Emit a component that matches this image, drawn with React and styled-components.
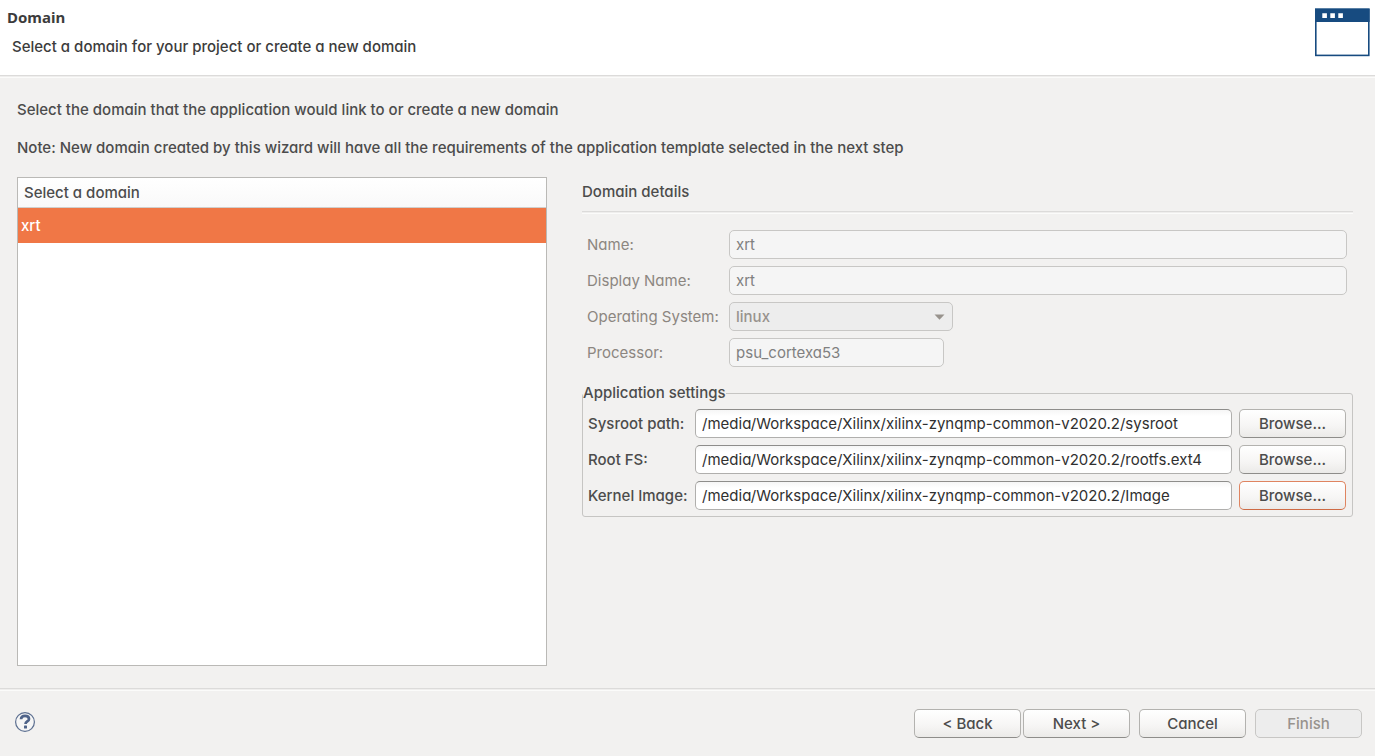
import React, { useState } from 'react';
import styled, { createGlobalStyle } from 'styled-components';

const GlobalStyle = createGlobalStyle`
    * {
        box-sizing: border-box;
    }
    body {
        margin: 0;
        background: #F2F1F0;
    }
    body, button, input, select, table {
        font-family: Inter, "Noto Sans", sans-serif;
        font-feature-settings: "cv11";
        font-size: 15px;
        font-weight: 500;
        line-height: 20px;
        color: #4C4C4C;
    }
`;
const Wizard = styled.div`
    display: flex;
    flex-direction: column;
    min-height: 100vh;
`;
const Header = styled.header`
    display: flex;
    justify-content: space-between;
    padding: 8px 4px 18px 7px;
    background: #FFFFFF;
`;
const Title = styled.h1`
    font-family: "Noto Sans", sans-serif;
    font-size: 15px;
    font-weight: 700;
    line-height: 18px;
    color: #3C3C3C;
    margin: 0 0 11px;
`;
const Subtitle = styled.p`
    margin: 0;
    padding-left: 5px;
    color: #3C3C3C;
`;
const Divider = styled.hr`
    width: 100%;
    height: 3px;
    flex: none;
    margin: 0;
    border: 0;
    border-top: 1px solid #DCDBDA;
    border-bottom: 1px solid #FBFBFA;
    background: #EFEEED;
`;
const Main = styled.main`
    flex: 1;
    display: flex;
    flex-direction: column;
    padding: 22px 22px 22px 17px;
`;
const Intro = styled.p`
    margin: 0 0 18px;
`;
const Columns = styled.div`
    flex: 1;
    display: grid;
    grid-template-columns: 11fr 16fr;
    gap: 35px;
    padding-top: 1px;
`;
const DomainList = styled.div`
    background: #FFFFFF;
    border: 1px solid #BAB9B6;
`;
const DomainTable = styled.table`
    width: 100%;
    border-collapse: separate;
    border-spacing: 0;
`;
const HeadCell = styled.th`
    height: 30px;
    padding: 0 6px;
    text-align: left;
    font-weight: 500;
    background: linear-gradient(#FFFFFF, #F9F9F9);
    border-bottom: 1px solid #D0CFCD;
`;
const DomainCell = styled.td`
    height: 35px;
    padding: 0 3px;
    cursor: default;
    color: ${({ $selected }) => ($selected ? '#FFFFFF' : '#3C3C3C')};
    background: ${({ $selected }) => ($selected ? '#F07746' : 'transparent')};
`;
const Details = styled.section`
    padding-top: 5px;
`;
const SectionTitle = styled.h2`
    font-size: 15px;
    font-weight: 500;
    line-height: 20px;
    margin: 0 0 9px;
`;
const DetailsForm = styled.div`
    display: grid;
    grid-template-columns: 135px 1fr;
    gap: 7px;
    align-items: center;
    padding: 16px 6px 16px 5px;
`;
const Label = styled.label`
    white-space: nowrap;
    font-weight: ${({ $muted }) => ($muted ? 400 : 500)};
    color: ${({ $muted }) => ($muted ? '#8C8680' : '#4C4C4C')};
`;
const TextInput = styled.input`
    width: ${({ $width }) => $width || '100%'};
    min-width: 0;
    height: 29px;
    padding: 0 6px;
    border: 1px solid #B0AFAD;
    border-top-color: #8E8D8B;
    border-radius: 5px;
    background: linear-gradient(#F6F6F6, #FFFFFF 6px);
    color: #303030;
    font-weight: 400;
    outline: none;

    &:disabled {
        border-color: #C8C7C5;
        background: #F5F5F5;
        color: #808080;
    }
`;
const SelectBox = styled.div`
    display: grid;
    align-items: center;
    width: 224px;

    > * {
        grid-area: 1 / 1;
    }
    svg {
        justify-self: end;
        margin-right: 8px;
        pointer-events: none;
    }
`;
const Select = styled.select`
    appearance: none;
    width: 100%;
    height: 29px;
    padding: 0 6px;
    border: 1px solid #C8C7C5;
    border-radius: 5px;
    background: #EDEDED;

    &:disabled {
        color: #98938D;
        opacity: 1;
    }
`;
const Settings = styled.fieldset`
    min-width: 0;
    margin: 0;
    padding: 0;
    border: 1px solid #C6C5C3;
    border-radius: 3px;
`;
const Legend = styled.legend`
    padding: 0;
`;
const SettingsForm = styled.div`
    display: grid;
    grid-template-columns: 100px 1fr 107px;
    gap: 7px;
    align-items: center;
    padding: 6px 6px 6px 5px;
`;
const Button = styled.button`
    width: 107px;
    height: 29px;
    padding: 0;
    border: 1px solid ${({ $focused }) => ($focused ? '#DF8460' : '#B3B2AF')};
    border-bottom-color: ${({ $focused }) => ($focused ? '#CE6A44' : '#8E8D8A')};
    border-radius: 5px;
    background: linear-gradient(#FFFFFF, #F6F5F4 60%, #EBEAE8);

    &:disabled {
        border-color: #C8C7C5;
        background: #EDEDED;
        color: #98938D;
    }
`;
const Footer = styled.footer`
    display: flex;
    align-items: flex-start;
    justify-content: space-between;
    padding: 18px 13px 18px 14px;
`;
const HelpButton = styled.button`
    display: flex;
    margin-top: 2px;
    padding: 0;
    border: 0;
    background: none;
`;
const Actions = styled.div`
    display: flex;
    gap: 9px;
`;
const StepButtons = styled.div`
    display: flex;
    gap: 2px;
`;

const WindowIcon = () => (
    <svg width="56" height="49" viewBox="0 0 56 49" aria-hidden="true">
        <rect x="0.8" y="1.2" width="53" height="46.2" fill="#FFFFFF" stroke="#174B80" strokeWidth="1.6" />
        <path d="M0 0.8h54.600v13.200H0z" fill="#174B80" />
        <path d="M7.3 5.3h4.6v4.6H7.3zM15.3 5.3h4.6v4.6h-4.6zM23.3 5.3h4.6v4.6h-4.6z" fill="#FFFFFF" />
    </svg>
);

const HelpIcon = () => (
    <svg width="22" height="22" viewBox="0 0 22 22" aria-hidden="true">
        <circle cx="11" cy="11" r="9.4" fill="#F6F6F6" stroke="#5C6F90" strokeWidth="1.2" />
        <path d="M7 8.3C7.100 6 8.700 4.900 11 4.900c2.400 0 4 1.100 4 3 0 2.600-3.500 2.500-3.500 5.100" fill="none" stroke="#4F6389" strokeWidth="2.700" />
        <rect x="10" y="14.600" width="3" height="2.900" rx="0.600" fill="#4F6389" />
    </svg>
);

const domains = ['xrt'];

const paths = [
    { id: 'sysroot', label: 'Sysroot path:', value: '/media/Workspace/Xilinx/xilinx-zynqmp-common-v2020.2/sysroot' },
    { id: 'rootfs', label: 'Root FS:', value: '/media/Workspace/Xilinx/xilinx-zynqmp-common-v2020.2/rootfs.ext4' },
    { id: 'kernel', label: 'Kernel Image:', value: '/media/Workspace/Xilinx/xilinx-zynqmp-common-v2020.2/Image', focused: true },
];

const App = () => {
    const [selected, setSelected] = useState('xrt');
    return (
        <Wizard>
            <GlobalStyle />
            <Header>
                <div>
                    <Title>Domain</Title>
                    <Subtitle>Select a domain for your project or create a new domain</Subtitle>
                </div>
                <WindowIcon />
            </Header>
            <Divider />
            <Main>
                <Intro>Select the domain that the application would link to or create a new domain</Intro>
                <Intro>Note: New domain created by this wizard will have all the requirements of the application template selected in the next step</Intro>
                <Columns>
                    <DomainList>
                        <DomainTable>
                            <thead>
                                <tr>
                                    <HeadCell scope="col">Select a domain</HeadCell>
                                </tr>
                            </thead>
                            <tbody>
                                {domains.map(name => (
                                    <tr key={name} onClick={() => setSelected(name)}>
                                        <DomainCell $selected={name === selected}>{name}</DomainCell>
                                    </tr>
                                ))}
                            </tbody>
                        </DomainTable>
                    </DomainList>
                    <Details>
                        <SectionTitle>Domain details</SectionTitle>
                        <Divider />
                        <DetailsForm>
                            <Label $muted htmlFor="name">Name:</Label>
                            <TextInput id="name" defaultValue="xrt" disabled />
                            <Label $muted htmlFor="display-name">Display Name:</Label>
                            <TextInput id="display-name" defaultValue="xrt" disabled />
                            <Label $muted htmlFor="os">Operating System:</Label>
                            <SelectBox>
                                <Select id="os" defaultValue="linux" disabled>
                                    <option value="linux">linux</option>
                                </Select>
                                <svg width="11" height="6" viewBox="0 0 11 6" aria-hidden="true">
                                    <path d="M0.500 0.500h10L5.500 5.700z" fill="#98938D" />
                                </svg>
                            </SelectBox>
                            <Label $muted htmlFor="processor">Processor:</Label>
                            <TextInput id="processor" $width="215px" defaultValue="psu_cortexa53" disabled />
                        </DetailsForm>
                        <Settings>
                            <Legend>Application settings</Legend>
                            <SettingsForm>
                                {paths.map(({ id, label, value, focused }) => (
                                    <React.Fragment key={id}>
                                        <Label htmlFor={id}>{label}</Label>
                                        <TextInput id={id} defaultValue={value} />
                                        <Button type="button" $focused={focused}>Browse...</Button>
                                    </React.Fragment>
                                ))}
                            </SettingsForm>
                        </Settings>
                    </Details>
                </Columns>
            </Main>
            <Divider />
            <Footer>
                <HelpButton type="button" aria-label="Help">
                    <HelpIcon />
                </HelpButton>
                <Actions>
                    <StepButtons>
                        <Button type="button">&lt; Back</Button>
                        <Button type="button">Next &gt;</Button>
                    </StepButtons>
                    <Button type="button">Cancel</Button>
                    <Button type="button" disabled>Finish</Button>
                </Actions>
            </Footer>
        </Wizard>
    );
};

export default App;
